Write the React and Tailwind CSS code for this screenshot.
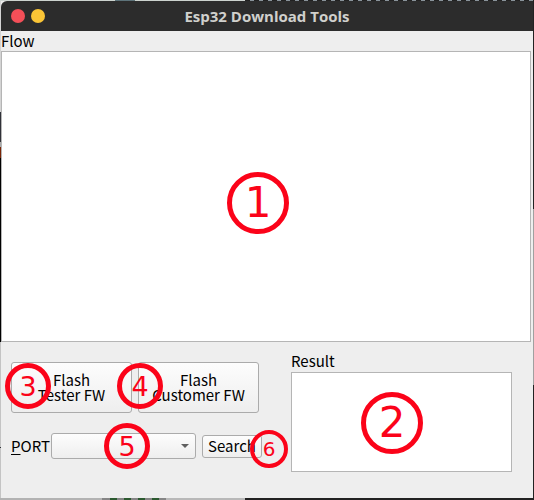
import React from "react";

const MARK_SIZES = {
  lg: "h-[62px] w-[62px] border-[5px] text-[42px]",
  md: "h-[46px] w-[46px] border-[5px] text-[27px]",
  sm: "h-[38px] w-[38px] border-[4px] text-[20px]",
};

function Mark({ n, size, className }) {
  return (
    <span
      className={`pointer-events-none absolute z-10 flex items-center justify-center rounded-full border-[#fb0319] font-['DejaVu_Sans',sans-serif] leading-none text-[#fb0319] ${MARK_SIZES[size]} ${className}`}
    >
      {n}
    </span>
  );
}

const flashButton =
  "h-[51px] w-[121px] rounded-[3px] border border-[#ababab] bg-linear-to-b from-[#fdfdfd] to-[#eeeeee] pb-[2px] text-center leading-[15px]";

function TitleBar() {
  return (
    <header className="grid h-[30px] shrink-0 grid-cols-[1fr_auto_1fr] items-center rounded-tl-[6px] bg-[#2c2c2c] px-[10px]">
      <div className="flex gap-[6px]">
        <button type="button" aria-label="Close" className="h-[14px] w-[14px] rounded-full bg-[#f34f58]" />
        <button type="button" aria-label="Minimize" className="h-[14px] w-[14px] rounded-full bg-[#fbc536]" />
      </div>
      <h1 className="font-['Open_Sans','Noto_Sans',sans-serif] text-[15px] leading-[20px] font-bold text-[#d0d0cc]">
        Esp32 Download Tools
      </h1>
    </header>
  );
}

export default function App() {
  return (
    <div className="flex min-h-screen flex-col bg-[#202124] font-['Noto_Sans_CJK_JP',sans-serif] text-[15px] text-black">
      <div className="flex h-px">
        <span className="w-[115px] bg-[#ccd3cf]" />
        <span className="w-[20px] bg-[#5d737a]" />
        <span className="w-[110px] bg-[#ccd3cf]" />
        <span className="flex-1 bg-[repeating-linear-gradient(90deg,#222_0,#222_5px,#89939a_5px,#89939a_9px)]" />
      </div>

      <div className="flex flex-1">
        <div className="flex w-px flex-col">
          <span className="h-[111px] bg-[#d4d4d4]" />
          <span className="h-[30px] bg-[#303238]" />
          <span className="h-[5px] bg-[#aaaaaa]" />
          <span className="h-[11px] bg-[#7a2507]" />
          <span className="h-[184px] bg-black" />
          <span className="h-[105px] bg-[#c4c4c4]" />
          <span className="h-px bg-[#303238]" />
          <span className="flex-1 bg-[#c4c4c4]" />
        </div>

        <main className="flex min-w-0 flex-1 flex-col bg-[#eeeeee]">
          <TitleBar />

          <label htmlFor="flow" className="h-[20px] leading-[20px]">
            Flow
          </label>
          <div className="relative mr-[2px] flex flex-1">
            <textarea
              id="flow"
              className="block min-h-[291px] flex-1 resize-none border border-[#b5b5b5] bg-white p-1 outline-none"
            />
            <Mark n="1" size="lg" className="top-[121px] left-[226px]" />
          </div>

          <div className="flex h-[156px] gap-[29px] pr-[21px] pl-[10px]">
            <div className="flex w-[251px] flex-col pt-[20px]">
              <div className="flex gap-[6px]">
                <div className="relative">
                  <button type="button" className={flashButton}>
                    Flash
                    <br />
                    Tester FW
                  </button>
                  <Mark n="3" size="md" className="top-[1px] -left-[6px]" />
                </div>
                <div className="relative">
                  <button type="button" className={flashButton}>
                    Flash
                    <br />
                    Customer FW
                  </button>
                  <Mark n="4" size="md" className="top-[1px] -left-[21px]" />
                </div>
              </div>

              <div className="mt-[20px] flex h-[26px] items-center">
                <label htmlFor="port" className="w-[40px] leading-[20px] whitespace-nowrap">
                  <span className="underline decoration-1 underline-offset-2">P</span>ORT
                </label>
                <div className="relative w-[145px]">
                  <select
                    id="port"
                    className="block h-[26px] w-full appearance-none rounded-[3px] border border-[#ababab] bg-linear-to-b from-[#fdfdfd] to-[#eeeeee] pl-2"
                  />
                  <svg
                    viewBox="0 0 8 4"
                    className="pointer-events-none absolute top-[11px] right-[7px] h-[4px] w-[8px] fill-[#606060]"
                    aria-hidden="true"
                  >
                    <path d="M0 0h8L4 4z" />
                  </svg>
                  <Mark n="5" size="md" className="-top-[10px] left-[53px]" />
                </div>
                <div className="relative ml-[6px]">
                  <button
                    type="button"
                    className="block h-[23px] w-[60px] rounded-[3px] border border-[#ababab] bg-linear-to-b from-[#fdfdfd] to-[#eeeeee] pb-[2px] leading-[19px]"
                  >
                    Search
                  </button>
                  <Mark n="6" size="sm" className="-top-[5px] left-[48px]" />
                </div>
              </div>
            </div>

            <div className="flex flex-1 flex-col pt-[10px] pb-[26px]">
              <label htmlFor="result" className="h-[20px] leading-[18px]">
                Result
              </label>
              <div className="relative flex flex-1">
                <textarea
                  id="result"
                  className="block w-full resize-none border border-[#b5b5b5] bg-white p-1 outline-none"
                />
                <Mark n="2" size="lg" className="top-[20px] left-[70px]" />
              </div>
            </div>
          </div>
        </main>

        <div className="flex w-px flex-col">
          <span className="h-[208px] bg-[#222222]" />
          <span className="h-[176px] bg-[#a0a0a0]" />
          <span className="flex-1 bg-[#222222]" />
        </div>
      </div>

      <div className="flex h-[2px]">
        <span className="w-[102px] bg-[#b2b2b2]" />
        <span className="w-[8px] bg-[#858585]" />
        <span className="w-[56px] bg-[repeating-linear-gradient(90deg,#2c5a30_0,#2c5a30_7px,#858585_7px,#858585_14px)]" />
        <span className="w-[79px] bg-[#b8b8b8]" />
        <span className="flex-1 bg-[#222222]" />
      </div>
    </div>
  );
}
